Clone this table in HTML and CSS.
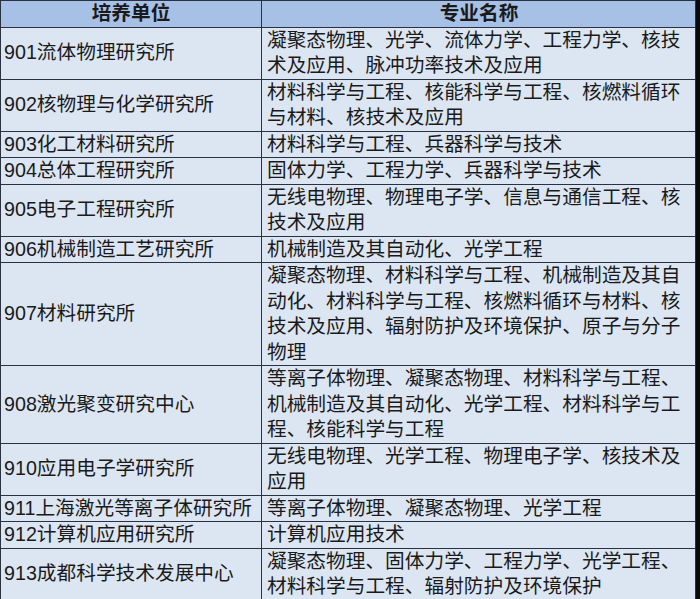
FILE: index.html
```html
<!DOCTYPE html>
<html lang="zh-CN">
<head>
<meta charset="utf-8">
<title>培养单位</title>
<link rel="stylesheet" href="styles.css">
</head>
<body>
<table class="tbl">
  <thead>
    <tr><th class="c-unit">培养单位</th><th class="c-major">专业名称</th></tr>
  </thead>
  <tbody>
    <tr><td class="c-unit">901流体物理研究所</td><td class="c-major">凝聚态物理、光学、流体力学、工程力学、核技术及应用、脉冲功率技术及应用</td></tr>
    <tr><td class="c-unit">902核物理与化学研究所</td><td class="c-major">材料科学与工程、核能科学与工程、核燃料循环与材料、核技术及应用</td></tr>
    <tr><td class="c-unit">903化工材料研究所</td><td class="c-major">材料科学与工程、兵器科学与技术</td></tr>
    <tr><td class="c-unit">904总体工程研究所</td><td class="c-major">固体力学、工程力学、兵器科学与技术</td></tr>
    <tr><td class="c-unit">905电子工程研究所</td><td class="c-major">无线电物理、物理电子学、信息与通信工程、核技术及应用</td></tr>
    <tr><td class="c-unit">906机械制造工艺研究所</td><td class="c-major">机械制造及其自动化、光学工程</td></tr>
    <tr><td class="c-unit">907材料研究所</td><td class="c-major">凝聚态物理、材料科学与工程、机械制造及其自动化、材料科学与工程、核燃料循环与材料、核技术及应用、辐射防护及环境保护、原子与分子物理</td></tr>
    <tr><td class="c-unit">908激光聚变研究中心</td><td class="c-major">等离子体物理、凝聚态物理、材料科学与工程、机械制造及其自动化、光学工程、材料科学与工程、核能科学与工程</td></tr>
    <tr><td class="c-unit">910应用电子学研究所</td><td class="c-major">无线电物理、光学工程、物理电子学、核技术及应用</td></tr>
    <tr><td class="c-unit">911上海激光等离子体研究所</td><td class="c-major">等离子体物理、凝聚态物理、光学工程</td></tr>
    <tr><td class="c-unit">912计算机应用研究所</td><td class="c-major">计算机应用技术</td></tr>
    <tr><td class="c-unit">913成都科学技术发展中心</td><td class="c-major">凝聚态物理、固体力学、工程力学、光学工程、材料科学与工程、辐射防护及环境保护</td></tr>
  </tbody>
</table>
</body>
</html>
```

FILE: styles.css
```css
html {
  background: #0a0a0a;
}
body {
  margin: 0;
  background: #0a0a0a;
}
.tbl {
  width: 696px;
  border-collapse: collapse;
  table-layout: fixed;
  font-family: "Liberation Sans", "Noto Sans CJK SC", sans-serif;
  font-size: 19.7px;
  line-height: 25.5px;
  color: #1a1a1a;
  background: #dce6f2;
}
.tbl th,
.tbl td {
  padding: 0 3px 0 4px;
  border: 1px solid #2a3140;
  vertical-align: middle;
  text-align: left;
  font-weight: normal;
}
.tbl th {
  background: #a6c1e5;
  font-weight: bold;
  text-align: center;
}
.tbl .c-unit {
  width: 254px;
  padding-left: 3px;
}
.tbl td.c-major {
  padding-left: 5px;
}
```
